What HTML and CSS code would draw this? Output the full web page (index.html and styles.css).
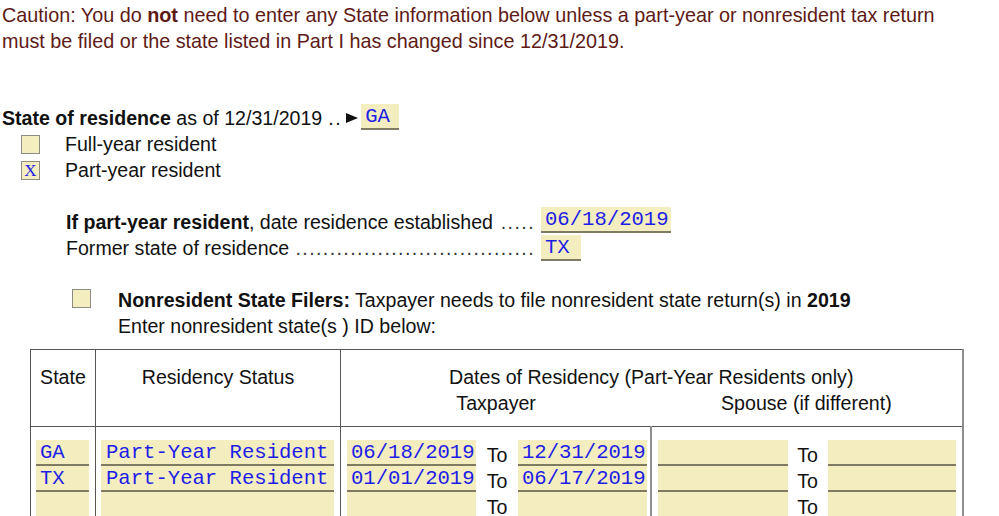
FILE: index.html
```html
<!DOCTYPE html>
<html>
<head>
<meta charset="utf-8">
<link rel="stylesheet" href="styles.css">
</head>
<body>
<div class="page">
  <p class="caution">Caution: You do <b>not</b> need to enter any State information below unless a part-year or nonresident tax return must be filed or the state listed in Part I has changed since 12/31/2019.</p>

  <div class="res-line">
    <span><b>State of residence</b> as of 12/31/2019</span>
    <span class="dots-short">..</span>
    <svg class="arrow" width="12" height="10" viewBox="0 0 12 10"><polygon points="0,0 12,5 0,10" fill="#111"/></svg>
    <span class="fld fld-ga">GA</span>
  </div>
  <div class="chk-row">
    <span class="box"></span>
    <span class="chk-label">Full-year resident</span>
  </div>
  <div class="chk-row">
    <span class="box">X</span>
    <span class="chk-label">Part-year resident</span>
  </div>

  <div class="py-block">
    <div class="py-row">
      <div class="py-left">
        <span class="py-label"><b>If part-year resident</b>, date residence established</span>
        <span class="leader">.....</span>
      </div>
      <span class="fld fld-date">06/18/2019</span>
    </div>
    <div class="py-row">
      <div class="py-left">
        <span class="py-label">Former state of residence</span>
        <span class="leader">...................................</span>
      </div>
      <span class="fld fld-tx">TX</span>
    </div>
  </div>

  <div class="nr-block">
    <span class="box nr-box"></span>
    <div class="nr-text">
      <div><b>Nonresident State Filers:</b> Taxpayer needs to file nonresident state return(s) in <b>2019</b></div>
      <div>Enter nonresident state(s ) ID below:</div>
    </div>
  </div>

  <table class="grid">
    <colgroup>
      <col class="w-state">
      <col class="w-status">
      <col class="w-tp">
      <col class="w-sp">
    </colgroup>
    <thead>
      <tr>
        <th>State</th>
        <th>Residency Status</th>
        <th colspan="2">
          <div>Dates of Residency (Part-Year Residents only)</div>
          <div class="sub"><span>Taxpayer</span><span>Spouse (if different)</span></div>
        </th>
      </tr>
    </thead>
    <tbody>
      <tr>
        <td class="c-state">
          <div class="fld cell-fld">GA</div>
          <div class="fld cell-fld">TX</div>
          <div class="fld cell-fld"></div>
        </td>
        <td class="c-status">
          <div class="fld cell-fld">Part-Year Resident</div>
          <div class="fld cell-fld">Part-Year Resident</div>
          <div class="fld cell-fld"></div>
        </td>
        <td class="c-tp">
          <div class="range"><span class="fld d1">06/18/2019</span><span class="to">To</span><span class="fld d2">12/31/2019</span></div>
          <div class="range"><span class="fld d1">01/01/2019</span><span class="to">To</span><span class="fld d2">06/17/2019</span></div>
          <div class="range"><span class="fld d1"></span><span class="to">To</span><span class="fld d2"></span></div>
        </td>
        <td class="c-sp">
          <div class="range"><span class="fld s1"></span><span class="to">To</span><span class="fld s2"></span></div>
          <div class="range"><span class="fld s1"></span><span class="to">To</span><span class="fld s2"></span></div>
          <div class="range"><span class="fld s1"></span><span class="to">To</span><span class="fld s2"></span></div>
        </td>
      </tr>
    </tbody>
  </table>
</div>
</body>
</html>
```

FILE: styles.css
```css
html, body {
  margin: 0;
  padding: 0;
  background: #ffffff;
}

body {
  font-family: "Liberation Sans", Arial, sans-serif;
  font-size: 19.6px;
  line-height: 26px;
  color: #111111;
}

.page {
  padding: 2px 0 0 2px;
}

.caution {
  margin: 0;
  color: #5e1a16;
  width: 970px;
  font-size: 19.8px;
}

.fld {
  display: inline-block;
  box-sizing: border-box;
  background: #f4edc0;
  border-bottom: 2px solid #7e7b62;
  font-family: "Liberation Mono", "Courier New", monospace;
  font-size: 20.6px;
  line-height: 22px;
  height: 26px;
  color: #1d1de6;
  padding: 2px 4px 0;
  white-space: nowrap;
  vertical-align: top;
}

/* state of residence line */
.res-line {
  margin-top: 51px;
  display: flex;
  align-items: flex-start;
}

.dots-short {
  margin-left: 6px;
  letter-spacing: 1.5px;
}

.arrow {
  margin: 8px 3px 0 4px;
  flex: none;
}

.fld-ga {
  width: 38px;
  margin-top: -1px;
}

.chk-row {
  display: flex;
  align-items: center;
  height: 26px;
  padding-left: 19px;
}

.box {
  box-sizing: border-box;
  width: 19px;
  height: 19px;
  border: 1px solid #8c8c84;
  background: #f4edc0;
  font-family: "Liberation Serif", "Times New Roman", serif;
  font-size: 17px;
  line-height: 17px;
  color: #1d1de6;
  text-align: center;
  flex: none;
}

.chk-label {
  margin-left: 25px;
}

/* part-year block */
.py-block {
  margin-top: 26px;
  padding-left: 64px;
}

.py-row {
  display: flex;
  height: 26px;
}

.py-left {
  width: 475px;
  display: flex;
  flex: none;
}

.py-label {
  white-space: nowrap;
  flex: none;
}

.leader {
  margin-left: auto;
  margin-right: 6px;
  white-space: nowrap;
  letter-spacing: 1.4px;
  color: #333;
}

.py-row:first-child .fld {
  margin-top: -2px;
}

.fld-date {
  width: 130px;
  flex: none;
}

.fld-tx {
  width: 40px;
  flex: none;
}

/* nonresident block */
.nr-block {
  margin-top: 26px;
  display: flex;
  align-items: flex-start;
  padding-left: 70px;
}

.nr-box {
  margin-top: 2px;
}

.nr-text {
  margin-left: 27px;
}

/* table */
.grid {
  margin-top: 10px;
  margin-left: 28px;
  border-collapse: collapse;
  table-layout: fixed;
  width: 933px;
  border-top: 1px solid #555;
  border-left: 1px solid #555;
  border-right: 2px solid #8d8d8d;
}

.w-state { width: 65px; }
.w-status { width: 245px; }
.w-tp { width: 310px; }
.w-sp { width: 312px; }

.grid th {
  font-weight: normal;
  padding: 14px 0 10px;
  vertical-align: top;
  text-align: center;
  border-right: 1px solid #555;
  border-bottom: 1px solid #555;
}

.grid th:last-child {
  border-right: none;
}

.sub {
  display: flex;
}

.sub span {
  flex: 1 1 0;
}

.grid td {
  vertical-align: top;
  padding: 13px 0 0;
  border-right: 1px solid #555;
}

.grid td.c-tp {
  border-right: 2px solid #8d8d8d;
}

.grid td.c-sp {
  border-right: none;
}

.cell-fld {
  display: block;
}

.c-state .cell-fld {
  margin: 0 6px 0 5px;
  padding-left: 4px;
}

.c-status .cell-fld {
  margin: 0 6px 0 5px;
  padding-left: 5px;
}

.range {
  display: flex;
  align-items: flex-start;
  height: 26px;
}

.to {
  text-align: center;
  flex: none;
  padding-top: 2px;
}

.c-tp .range {
  padding-left: 6px;
}

.d1, .d2 {
  width: 129px;
  flex: none;
}

.c-tp .to {
  width: 42px;
}

.c-sp .range {
  padding-left: 6px;
}

.s1 {
  width: 130px;
  flex: none;
}

.c-sp .to {
  width: 40px;
}

.s2 {
  width: 128px;
  flex: none;
}
```
